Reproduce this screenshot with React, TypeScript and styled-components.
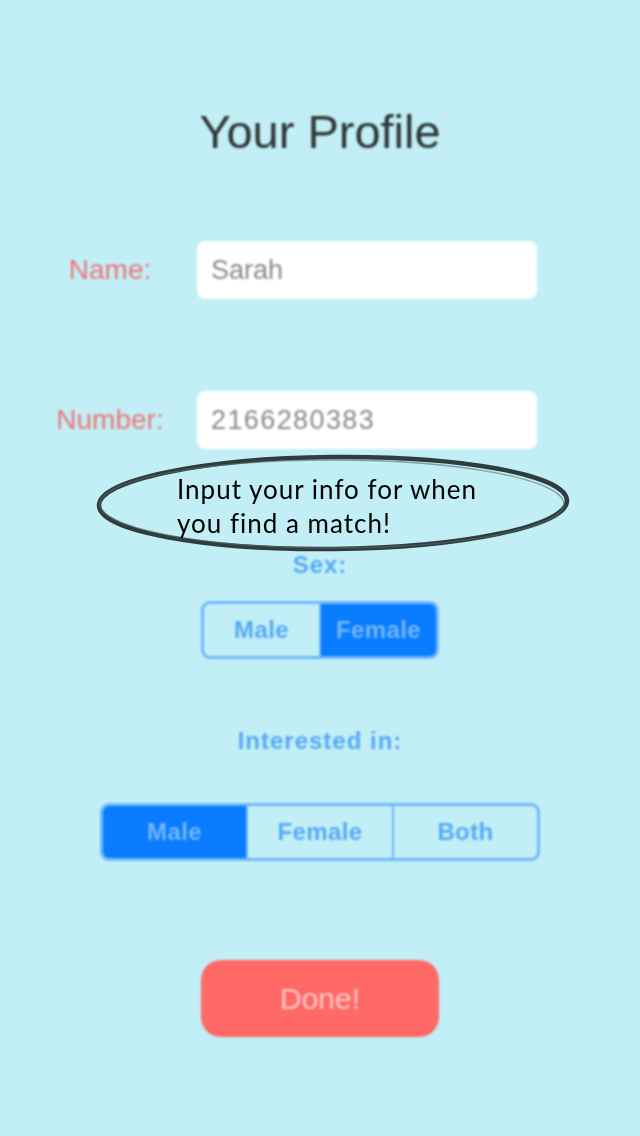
import styled, { createGlobalStyle } from 'styled-components';

const GlobalStyle = createGlobalStyle`
  html, body {
    margin: 0;
    padding: 0;
    background: #c1eff5;
  }
  body {
    font-family: 'Liberation Sans', Arial, sans-serif;
  }
`;

const Screen = styled.div`
  position: relative;
  width: 640px;
  height: 1136px;
  overflow: hidden;
  background: #c1eff5;
`;

const Content = styled.div`
  display: flex;
  flex-direction: column;
  align-items: center;
  padding-top: 105px;
  filter: blur(1.3px);
`;

const Title = styled.h1`
  margin: 0;
  font-size: 47px;
  line-height: 54px;
  font-weight: normal;
  color: #2f3537;
`;

const FieldRow = styled.div<{ $top: number }>`
  display: flex;
  align-items: center;
  width: 640px;
  padding-left: 40px;
  margin-top: ${(p) => p.$top}px;
  box-sizing: border-box;
`;

const FieldLabel = styled.label`
  width: 140px;
  margin-right: 17px;
  text-align: center;
  font-size: 28px;
  color: #ee7676;
`;

const FieldInput = styled.div<{ $spacing?: number }>`
  width: 340px;
  height: 58px;
  background: #fff;
  border-radius: 8px;
  box-sizing: border-box;
  padding-left: 14px;
  display: flex;
  align-items: center;
  font-size: 27px;
  letter-spacing: ${(p) => p.$spacing ?? 0}px;
  color: #8a8b90;
`;

const SectionLabel = styled.div<{ $top: number }>`
  margin-top: ${(p) => p.$top}px;
  font-size: 24px;
  line-height: 28px;
  font-weight: bold;
  letter-spacing: 1px;
  color: #55a8f7;
`;

const Segmented = styled.div<{ $top: number }>`
  display: flex;
  margin-top: ${(p) => p.$top}px;
  border: 3px solid #6fb7f9;
  border-radius: 9px;
  overflow: hidden;
`;

const Segment = styled.div<{ $active?: boolean; $width: number }>`
  width: ${(p) => p.$width}px;
  height: 52px;
  display: flex;
  align-items: center;
  justify-content: center;
  font-size: 24px;
  font-weight: bold;
  letter-spacing: 0.4px;
  color: ${(p) => (p.$active ? '#72b8f9' : '#55a8f7')};
  background: ${(p) => (p.$active ? '#0a7cff' : 'transparent')};
  & + & {
    border-left: 2px solid #6fb7f9;
  }
`;

const DoneButton = styled.button`
  margin-top: 99px;
  width: 238px;
  height: 77px;
  border: none;
  border-radius: 20px;
  background: #ff6966;
  color: #ffc6c4;
  font-family: 'Liberation Sans', Arial, sans-serif;
  font-size: 30px;
`;

const Callout = styled.div`
  position: absolute;
  left: 94px;
  top: 451px;
  width: 478px;
  height: 104px;
`;

const CalloutShape = styled.svg`
  position: absolute;
  inset: 0;
`;

const CalloutText = styled.p`
  position: relative;
  margin: 0;
  padding: 21px 0 0 83px;
  font-family: Lato, 'Noto Sans', sans-serif;
  font-size: 26px;
  line-height: 34px;
  letter-spacing: 1px;
  color: #000;
`;

export default function App() {
  return (
    <>
      <GlobalStyle />
      <Screen>
        <Content>
          <Title>Your Profile</Title>
          <FieldRow $top={82}>
            <FieldLabel>Name:</FieldLabel>
            <FieldInput>Sarah</FieldInput>
          </FieldRow>
          <FieldRow $top={92}>
            <FieldLabel>Number:</FieldLabel>
            <FieldInput $spacing={1.4}>2166280383</FieldInput>
          </FieldRow>
          <SectionLabel $top={102}>Sex:</SectionLabel>
          <Segmented $top={22}>
            <Segment $width={115}>Male</Segment>
            <Segment $width={115} $active>
              Female
            </Segment>
          </Segmented>
          <SectionLabel $top={68}>Interested in:</SectionLabel>
          <Segmented $top={48}>
            <Segment $width={143} $active>
              Male
            </Segment>
            <Segment $width={144}>Female</Segment>
            <Segment $width={143}>Both</Segment>
          </Segmented>
          <DoneButton>Done!</DoneButton>
        </Content>
        <Callout>
          <CalloutShape width="478" height="104" viewBox="0 0 478 104">
            <ellipse
              cx="239"
              cy="52"
              rx="234"
              ry="46"
              fill="#c1eff5"
              stroke="#2f3d3e"
              strokeWidth="4.5"
              transform="rotate(-0.6 239 52)"
            />
            <ellipse
              cx="238"
              cy="53"
              rx="232"
              ry="44"
              fill="none"
              stroke="#5b6b6c"
              strokeWidth="1.5"
              opacity="0.6"
            />
          </CalloutShape>
          <CalloutText>
            Input your info for when
            <br />
            you find a match!
          </CalloutText>
        </Callout>
      </Screen>
    </>
  );
}
